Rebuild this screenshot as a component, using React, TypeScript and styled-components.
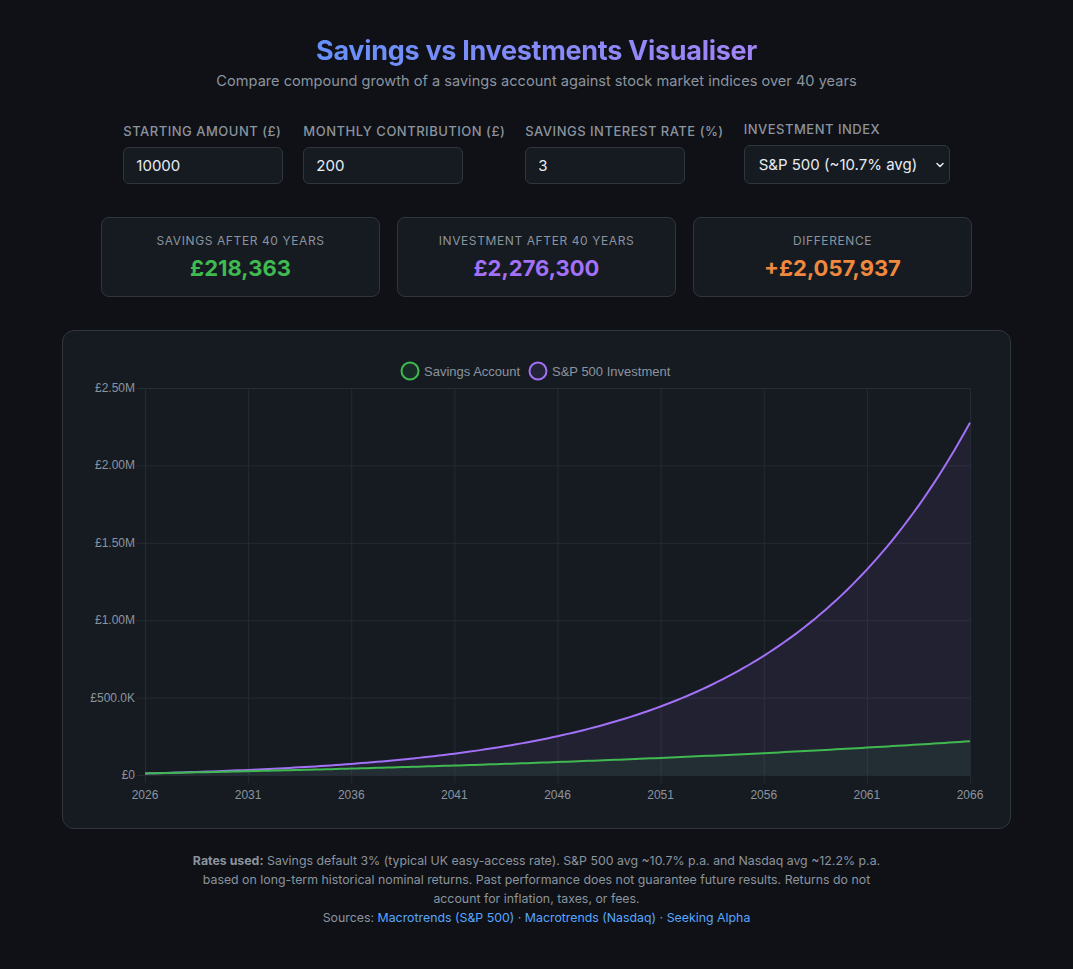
import React from "react";
import styled, { createGlobalStyle } from "styled-components";
import { ChevronDown } from "lucide-react";

const GlobalStyle = createGlobalStyle`
  body {
    margin: 0;
    background: #0f1117;
    color: #c9d1d9;
    font-family: Inter, "Noto Sans", sans-serif;
  }
`;

const Page = styled.div`
  padding: 34px 20px 40px;
  display: flex;
  flex-direction: column;
  align-items: center;
`;

const Title = styled.h1`
  margin: 0;
  font-size: 27px;
  line-height: 33px;
  font-weight: 700;
  letter-spacing: -0.3px;
  background: linear-gradient(90deg, #6590fa, #a385f6);
  -webkit-background-clip: text;
  background-clip: text;
  color: transparent;
`;

const Subtitle = styled.p`
  margin: 4px 0 0;
  font-size: 14.6px;
  line-height: 20px;
  color: #8b949e;
`;

const Controls = styled.div`
  margin-top: 29px;
  display: flex;
  gap: 20px;
  align-items: flex-end;
  justify-content: center;
`;

const Field = styled.label`
  display: flex;
  flex-direction: column;
  gap: 7px;
`;

const FieldLabel = styled.span`
  font-size: 13px;
  line-height: 18px;
  font-weight: 500;
  letter-spacing: 0.5px;
  text-transform: uppercase;
  color: #8b949e;
`;

const Input = styled.input`
  box-sizing: border-box;
  width: 160px;
  height: 37px;
  padding: 0 12px;
  font: inherit;
  font-size: 15px;
  color: #e6edf3;
  background: #161b22;
  border: 1px solid #30363d;
  border-radius: 6px;
  outline: none;
`;

const SelectWrap = styled.div`
  position: relative;
  width: 206px;
`;

const Select = styled.select`
  box-sizing: border-box;
  appearance: none;
  width: 100%;
  height: 39px;
  padding: 0 24px 0 14px;
  font: inherit;
  font-size: 15px;
  color: #e6edf3;
  background: #161b22;
  border: 1px solid #30363d;
  border-radius: 6px;
  outline: none;
`;

const Chevron = styled(ChevronDown)`
  position: absolute;
  right: 4px;
  top: 14px;
  pointer-events: none;
  color: #e6edf3;
`;

const Stats = styled.div`
  margin-top: 33px;
  width: 871px;
  display: grid;
  grid-template-columns: repeat(3, 1fr);
  gap: 17px;
`;

const StatCard = styled.div`
  box-sizing: border-box;
  height: 80px;
  padding: 15px 12px 14px;
  background: #161b22;
  border: 1px solid #30363d;
  border-radius: 8px;
  text-align: center;
`;

const StatLabel = styled.div`
  font-size: 12px;
  line-height: 16px;
  letter-spacing: 0.6px;
  text-transform: uppercase;
  color: #8b949e;
`;

const StatValue = styled.div<{ $color: string }>`
  margin-top: 5px;
  font-size: 22px;
  line-height: 28px;
  font-weight: 700;
  color: ${(p) => p.$color};
`;

const ChartCard = styled.div`
  margin-top: 33px;
  box-sizing: border-box;
  width: 949px;
  height: 499px;
  padding: 20px;
  background: #161b22;
  border: 1px solid #30363d;
  border-radius: 12px;
`;

const Footer = styled.p`
  margin: 22px 0 0;
  max-width: 700px;
  font-size: 12.35px;
  line-height: 19px;
  color: #8b949e;
  text-align: center;
  strong {
    font-weight: 700;
  }
`;

const Link = styled.a`
  color: #58a6ff;
  text-decoration: none;
`;

const GREEN = "#3fb950";
const PURPLE = "#a371f7";

function series(rate: number) {
  const out: number[] = [];
  const r = rate / 100 / 12;
  let v = 10000;
  out.push(v);
  for (let m = 1; m <= 480; m++) {
    v = v * (1 + r) + 200;
    if (m % 3 === 0) out.push(v);
  }
  return out;
}

const W = 907;
const H = 457;
const L = 62;
const R = 887;
const T = 37;
const B = 424;
const MAX = 2500000;
const STEPS = 160;

const px = (i: number) => L + ((R - L) * i) / STEPS;
const py = (v: number) => B - ((B - T) * v) / MAX;

const Chart: React.FC = () => {
  const savings = series(3);
  const invest = series(10.7);
  const line = (d: number[]) =>
    d.map((v, i) => `${i ? "L" : "M"}${px(i).toFixed(2)},${py(v).toFixed(2)}`).join(" ");
  const area = (d: number[]) => `${line(d)} L${R},${B} L${L},${B} Z`;
  const yTicks = [0, 500000, 1000000, 1500000, 2000000, 2500000];
  const yLabel = (v: number) =>
    v === 0 ? "£0" : v < 1000000 ? `£${(v / 1000).toFixed(1)}K` : `£${(v / 1000000).toFixed(2)}M`;
  const xTicks = Array.from({ length: 9 }, (_, k) => k * 20);
  const font = "'Liberation Sans', Arial, sans-serif";

  return (
    <svg width={W} height={H} style={{ display: "block" }} fontFamily={font} fontSize="12">
      {/* legend */}
      <g fontSize="13">
        <circle cx={327} cy={20} r={8.5} fill="rgba(63,185,80,0.1)" stroke={GREEN} strokeWidth={2} />
        <text x={341} y={24.5} fill="#8b949e">Savings Account</text>
        <circle cx={455} cy={20} r={8.5} fill="rgba(163,113,247,0.1)" stroke={PURPLE} strokeWidth={2} />
        <text x={469} y={24.5} fill="#8b949e">S&amp;P 500 Investment</text>
      </g>

      {/* grid */}
      {yTicks.map((v) => (
        <g key={v}>
          <line x1={L - 8} x2={R} y1={py(v) + 0.5} y2={py(v) + 0.5} stroke="#262b33" />
          <text x={L - 10} y={py(v) + 4} textAnchor="end" fill="#8b949e">
            {yLabel(v)}
          </text>
        </g>
      ))}
      {xTicks.map((i) => (
        <g key={i}>
          <line x1={px(i) + 0.5} x2={px(i) + 0.5} y1={T} y2={B + 8} stroke="#262b33" />
          <text x={px(i)} y={448} textAnchor="middle" fill="#8b949e">
            {2026 + i / 4}
          </text>
        </g>
      ))}

      <path d={area(invest)} fill="rgba(163,113,247,0.08)" />
      <path d={area(savings)} fill="rgba(63,185,80,0.08)" />
      <path d={line(invest)} fill="none" stroke={PURPLE} strokeWidth={2} />
      <path d={line(savings)} fill="none" stroke={GREEN} strokeWidth={2} />
    </svg>
  );
};

export default function App() {
  return (
    <Page>
      <GlobalStyle />
      <Title>Savings vs Investments Visualiser</Title>
      <Subtitle>Compare compound growth of a savings account against stock market indices over 40 years</Subtitle>

      <Controls>
        <Field>
          <FieldLabel>Starting Amount (£)</FieldLabel>
          <Input type="number" defaultValue={10000} />
        </Field>
        <Field>
          <FieldLabel>Monthly Contribution (£)</FieldLabel>
          <Input type="number" defaultValue={200} />
        </Field>
        <Field>
          <FieldLabel>Savings Interest Rate (%)</FieldLabel>
          <Input type="number" defaultValue={3} />
        </Field>
        <Field>
          <FieldLabel>Investment Index</FieldLabel>
          <SelectWrap>
            <Select defaultValue="sp">
              <option value="sp">S&amp;P 500 (~10.7% avg)</option>
              <option value="nq">Nasdaq (~12.2% avg)</option>
            </Select>
            <Chevron size={12} strokeWidth={3} />
          </SelectWrap>
        </Field>
      </Controls>

      <Stats>
        <StatCard>
          <StatLabel>Savings after 40 years</StatLabel>
          <StatValue $color="#3fb950">£218,363</StatValue>
        </StatCard>
        <StatCard>
          <StatLabel>Investment after 40 years</StatLabel>
          <StatValue $color="#a371f7">£2,276,300</StatValue>
        </StatCard>
        <StatCard>
          <StatLabel>Difference</StatLabel>
          <StatValue $color="#f0883e">+£2,057,937</StatValue>
        </StatCard>
      </Stats>

      <ChartCard>
        <Chart />
      </ChartCard>

      <Footer>
        <strong>Rates used:</strong> Savings default 3% (typical UK easy-access rate). S&amp;P 500 avg ~10.7% p.a.
        and Nasdaq avg ~12.2% p.a. based on long-term historical nominal returns. Past performance does not
        guarantee future results. Returns do not account for inflation, taxes, or fees.
        <br />
        Sources: <Link href="#">Macrotrends (S&amp;P 500)</Link> · <Link href="#">Macrotrends (Nasdaq)</Link> ·{" "}
        <Link href="#">Seeking Alpha</Link>
      </Footer>
    </Page>
  );
}
